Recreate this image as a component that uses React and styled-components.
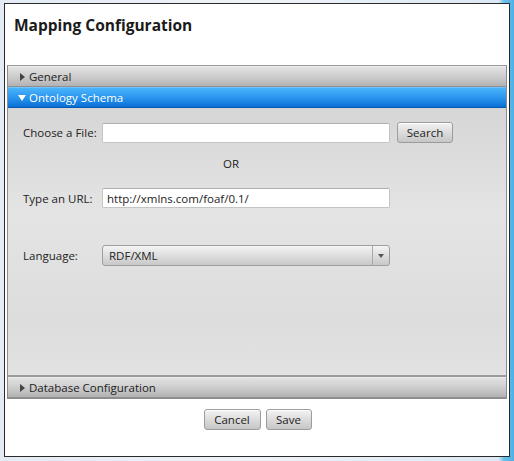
import React from "react";
import styled, { createGlobalStyle } from "styled-components";

const Global = createGlobalStyle`
  html, body { margin: 0; padding: 0; }
  body {
    width: 514px; height: 461px; overflow: hidden;
    font-family: "Open Sans", "Noto Sans", "Liberation Sans", sans-serif;
    background: #dbe6f1;
  }
  #root { height: 100%; }
`;

const Frame = styled.div`
  box-sizing: border-box;
  width: 514px; height: 461px;
  padding: 3px 4px 4px 4px;
  background: linear-gradient(90deg, #e3ebf4 0%, #eef3f8 50%, #dce8f3 97%, #6cc0ea 98%, #4fb0e6 100%);
  display: flex;
`;

const Dialog = styled.div`
  flex: 1;
  display: flex;
  flex-direction: column;
  background: #fff;
  border: 1px solid #2a2a2a;
`;

const Title = styled.h1`
  margin: 0;
  height: 61px;
  box-sizing: border-box;
  padding: 11px 0 0 9px;
  font-size: 15.5px;
  line-height: 20px;
  font-weight: 700;
  color: #1a1a1a;
`;

const Accordion = styled.div`
  margin: 0 2px;
  border: 1px solid #8c8c8c;
  border-top-color: #9a9a9a;
  display: flex;
  flex-direction: column;
`;

const Header = styled.div`
  height: 21px;
  box-sizing: border-box;
  display: flex;
  align-items: center;
  padding-left: 11px;
  gap: 3px;
  font-size: 11.5px;
  color: ${p => (p.$active ? "#fff" : "#222")};
  background: ${p =>
    p.$active
      ? "linear-gradient(#4ab4fb, #2b96ee 50%, #0a6fd5)"
      : "linear-gradient(#e2e2e2, #cdcdcd 50%, #b2b2b2)"};
  border-top: 1px solid ${p => (p.$active ? "#6fc2fb" : "#ededed")};
  border-bottom: 1px solid ${p => (p.$active ? "#0759b0" : "#8f8f8f")};
`;

const Arrow = styled.span`
  display: inline-block;
  width: 0; height: 0;
  ${p =>
    p.$down
      ? `border-left: 4px solid transparent; border-right: 4px solid transparent; border-top: 6px solid #fff; margin-top: 1px; margin-left: -1px;`
      : `border-top: 4px solid transparent; border-bottom: 4px solid transparent; border-left: 5px solid #444; margin-left: 1px; margin-right: 1px;`}
`;

const Content = styled.div`
  height: 269px;
  box-sizing: border-box;
  padding: 14px 15px 0;
  background: linear-gradient(#d6d6d6, #e4e4e4 40%, #dddddd 80%, #e2e2e2);
  border-bottom: 2px solid #9a9a9a;
  display: flex;
  flex-direction: column;
  font-size: 11.5px;
  color: #222;
`;

const Row = styled.div`
  display: grid;
  grid-template-columns: 72px 288px auto;
  column-gap: 7px;
  align-items: center;
  margin-top: ${p => p.$mt || 0}px;
`;

const Label = styled.label`
  white-space: nowrap;
`;

const Input = styled.div`
  height: 20px;
  box-sizing: border-box;
  background: #fff;
  border: 1px solid #c4c4c4;
  border-top-color: #b0b0b0;
  border-radius: 2px;
  padding: 0 4px;
  display: flex;
  align-items: center;
  font-size: 11.5px;
  color: #222;
`;

const Or = styled.div`
  grid-column: 2;
  padding-left: 121px;
  line-height: 16px;
`;

const Button = styled.button`
  height: 21px;
  width: ${p => p.$w}px;
  box-sizing: border-box;
  padding: 0;
  font-family: inherit;
  font-size: 11.5px;
  color: #222;
  background: linear-gradient(#f3f3f3, #dcdcdc 50%, #c6c6c6);
  border: 1px solid #9c9c9c;
  border-radius: 3px;
  box-shadow: inset 0 1px 0 #fff;
`;

const Select = styled.div`
  height: 21px;
  box-sizing: border-box;
  display: flex;
  border: 1px solid #9e9e9e;
  border-radius: 3px;
  background: linear-gradient(#f4f4f4, #dedede 50%, #c8c8c8);
  font-size: 11.5px;
  color: #222;
`;

const SelectText = styled.div`
  flex: 1;
  display: flex;
  align-items: center;
  padding-left: 6px;
`;

const SelectArrow = styled.div`
  width: 16px;
  border-left: 1px solid #a8a8a8;
  display: flex;
  align-items: center;
  justify-content: center;
  &::after {
    content: "";
    border-left: 3px solid transparent;
    border-right: 3px solid transparent;
    border-top: 4px solid #555;
  }
`;

const Footer = styled.div`
  flex: 1;
  display: flex;
  justify-content: center;
  align-items: flex-start;
  padding-top: 10px;
  gap: 5px;
  padding-left: 1px;
`;

export default function App() {
  return (
    <>
      <Global />
      <Frame>
        <Dialog>
          <Title>Mapping Configuration</Title>
          <Accordion>
            <Header>
              <Arrow />
              General
            </Header>
            <Header $active>
              <Arrow $down />
              Ontology Schema
            </Header>
            <Content>
              <Row>
                <Label>Choose a File:</Label>
                <Input />
                <Button $w={56}>Search</Button>
              </Row>
              <Row $mt={13}>
                <Or>OR</Or>
              </Row>
              <Row $mt={16}>
                <Label>Type an URL:</Label>
                <Input>http://xmlns.com/foaf/0.1/</Input>
              </Row>
              <Row $mt={37}>
                <Label>Language:</Label>
                <Select>
                  <SelectText>RDF/XML</SelectText>
                  <SelectArrow />
                </Select>
              </Row>
            </Content>
            <Header>
              <Arrow />
              Database Configuration
            </Header>
          </Accordion>
          <Footer>
            <Button $w={57}>Cancel</Button>
            <Button $w={46}>Save</Button>
          </Footer>
        </Dialog>
      </Frame>
    </>
  );
}
